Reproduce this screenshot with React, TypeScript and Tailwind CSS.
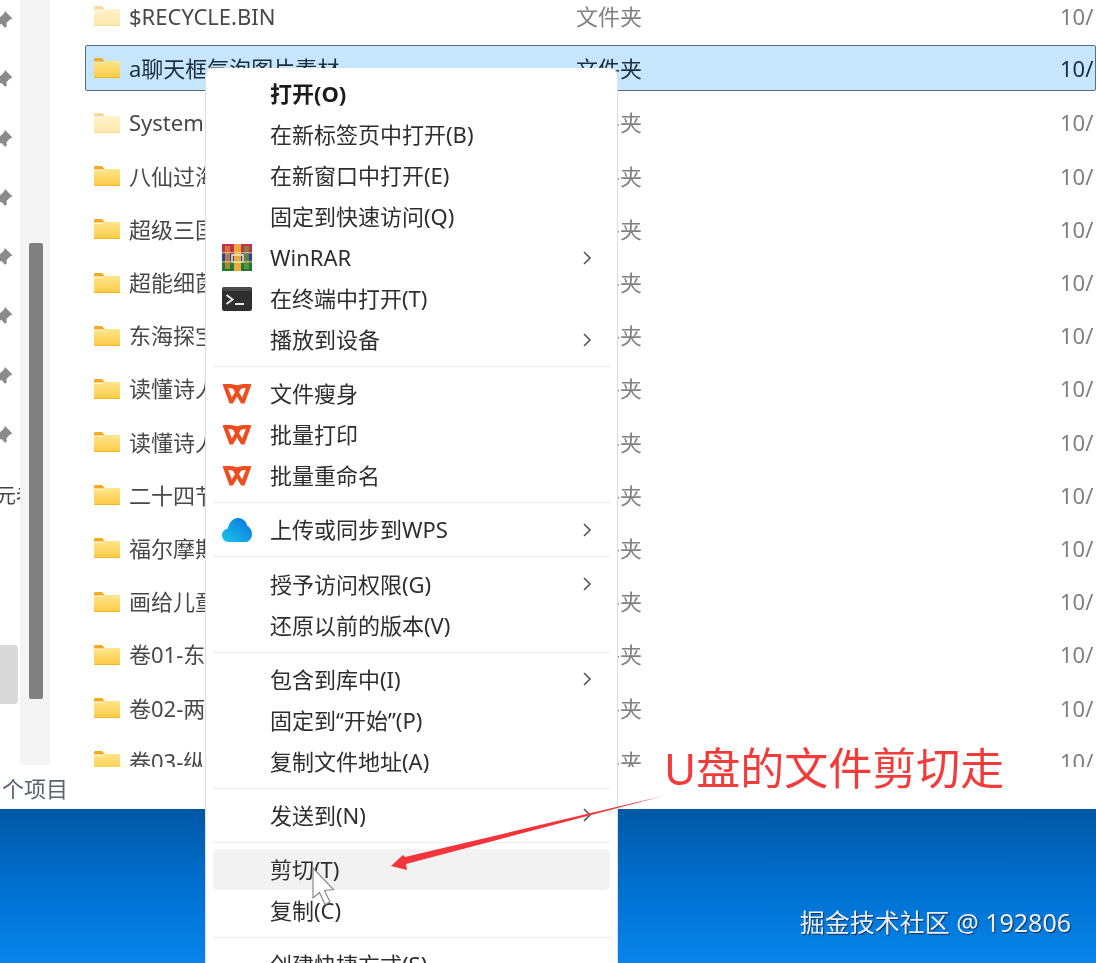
import React from "react";

const font = { fontFamily: '"Noto Sans", "Noto Sans CJK SC", sans-serif' };

type Row = { name: string; hidden?: boolean; selected?: boolean };
const rows: Row[] = [
  { name: "$RECYCLE.BIN", hidden: true },
  { name: "a聊天框气泡图片素材", selected: true },
  { name: "System Volume Information", hidden: true },
  { name: "八仙过海" },
  { name: "超级三国" },
  { name: "超能细菌" },
  { name: "东海探宝" },
  { name: "读懂诗人" },
  { name: "读懂诗人" },
  { name: "二十四节气" },
  { name: "福尔摩斯" },
  { name: "画给儿童" },
  { name: "卷01-东" },
  { name: "卷02-两" },
  { name: "卷03-纵" },
];

function Folder({ pale }: { pale?: boolean }) {
  return (
    <svg width="28" height="22" viewBox="0 0 28 22" className={pale ? "shrink-0 opacity-45" : "shrink-0"}>
      <defs>
        <linearGradient id="fd" x1="0" y1="0" x2="0" y2="1">
          <stop offset="0" stopColor="#ffe58c" />
          <stop offset="1" stopColor="#fccb45" />
        </linearGradient>
      </defs>
      <path d="M1 2.500C1 1.500 1.600 1 2.500 1h6.500l3 3.500H1z" fill="#f3ab1d" />
      <path d="M1 5.500h9.500l2-1.500H26c.7 0 1 .4 1 1v15c0 .7-.4 1-1 1H2c-.7 0-1-.4-1-1z" fill="url(#fd)" />
      <rect x="1" y="20" width="26" height="1" fill="#f3b52c" />
    </svg>
  );
}

function Pin() {
  return (
    <svg width="20" height="20" viewBox="0 0 20 20" className="-ml-[7px] block shrink-0">
      <path d="M12 1l7.500 7.500-2.500 1-3.500 3.500.3 3.500-1.800 1.200-3.800-4L3 18.500l-1-1 4.800-5.500L3 8.200l1.200-1.800 3.500.3L11 3.500z" fill="#8a8a8a" />
    </svg>
  );
}

function Chevron() {
  return (
    <svg width="10" height="16" viewBox="0 0 10 16" className="absolute right-[18px] top-1/2 -translate-y-1/2">
      <path d="M2 2l6 6-6 6" fill="none" stroke="#555" strokeWidth="1.6" />
    </svg>
  );
}

function WinRar() {
  return (
    <svg width="30" height="27" viewBox="0 0 30 27">
      <rect x="0" y="0" width="30" height="9" fill="#c4314b" />
      <rect x="0" y="9" width="30" height="9" fill="#34409c" />
      <rect x="0" y="18" width="30" height="9" fill="#1f7a3a" />
      <rect x="3" y="2" width="5" height="23" fill="#d98c3a" opacity=".75" />
      <rect x="22" y="2" width="5" height="23" fill="#6f9e3a" opacity=".7" />
      <rect x="12" y="0" width="7" height="27" fill="#ecaa3c" />
      <rect x="10" y="11" width="11" height="7" fill="none" stroke="#f4e2b8" strokeWidth="1.6" />
      <rect x="0" y="8" width="30" height="1.400" fill="#e8d090" opacity=".7" />
      <rect x="0" y="17" width="30" height="1.400" fill="#e8d090" opacity=".7" />
    </svg>
  );
}

function Terminal() {
  return (
    <svg width="30" height="24" viewBox="0 0 30 24">
      <rect width="30" height="24" rx="2.500" fill="#2e2e2e" />
      <rect width="30" height="4" rx="2" fill="#4a4a4a" />
      <path d="M4.500 8l6 4.500-6 4.500" fill="none" stroke="#e8e8e8" strokeWidth="2" />
      <rect x="13" y="16" width="9" height="2" fill="#e8e8e8" />
    </svg>
  );
}

function Wps() {
  return (
    <svg width="30" height="21" viewBox="0 0 30 21">
      <path
        d="M0.500 1.200C6 .6 10.500.8 15 2.200 19.500.8 24 .6 29.500 1.200L22.500 20.500h-3.400L15 13.500 10.900 20.500H7.500zM6.200 5l3.600 9.600L13 9.200 11.200 5.900C9.500 5.200 8 5 6.200 5zM23.800 5c-1.800 0-3.300.2-5 .9L17 9.200l3.200 5.400z"
        fill="#ee4d1f"
        fillRule="evenodd"
      />
    </svg>
  );
}

function Cloud() {
  return (
    <svg width="30" height="24" viewBox="0 0 30 24">
      <defs>
        <linearGradient id="cl" x1="0" y1="1" x2="1" y2="0">
          <stop offset="0" stopColor="#14c8e6" />
          <stop offset="1" stopColor="#0f6fe0" />
        </linearGradient>
      </defs>
      <path d="M6.500 24C2.800 24 0 21 0 17.300c0-3.400 2.400-6 5.700-6.500C7 4.600 11 0 16 0c4.600 0 8.300 3.300 9.300 7.800C28.200 9.500 30 12.600 30 16.200 30 20.800 27 24 23 24z" fill="url(#cl)" />
    </svg>
  );
}

type Item = { label: string; bold?: boolean; icon?: React.ReactNode; sub?: boolean; hot?: boolean } | "sep";
const items: Item[] = [
  { label: "打开(O)", bold: true },
  { label: "在新标签页中打开(B)" },
  { label: "在新窗口中打开(E)" },
  { label: "固定到快速访问(Q)" },
  { label: "WinRAR", icon: <WinRar />, sub: true },
  { label: "在终端中打开(T)", icon: <Terminal /> },
  { label: "播放到设备", sub: true },
  "sep",
  { label: "文件瘦身", icon: <Wps /> },
  { label: "批量打印", icon: <Wps /> },
  { label: "批量重命名", icon: <Wps /> },
  "sep",
  { label: "上传或同步到WPS", icon: <Cloud />, sub: true },
  "sep",
  { label: "授予访问权限(G)", sub: true },
  { label: "还原以前的版本(V)" },
  "sep",
  { label: "包含到库中(I)", sub: true },
  { label: "固定到\u201c开始\u201d(P)" },
  { label: "复制文件地址(A)" },
  "sep",
  { label: "发送到(N)", sub: true },
  "sep",
  { label: "剪切(T)", hot: true },
  { label: "复制(C)" },
  "sep",
  { label: "创建快捷方式(S)" },
];

export default function App() {
  return (
    <div className="relative h-[963px] w-[1096px] overflow-hidden bg-white blur-[0.5px]" style={font}>
      {/* explorer window */}
      <div className="flex h-[767px] overflow-hidden bg-white">
        <div className="relative flex w-[20px] shrink-0 flex-col gap-[39.300px] overflow-hidden pt-[10px]">
          {Array.from({ length: 8 }).map((_, i) => (
            <Pin key={i} />
          ))}
          <div className="-ml-[4px] text-[20px] leading-[24px] whitespace-nowrap text-[#444]">元老</div>
          <div className="absolute left-0 top-[645px] h-[59px] w-[18px] rounded-r-[4px] bg-[#d9d9d9]" />
        </div>
        <div className="h-[765px] w-[30px] shrink-0 bg-[#f4f4f4] pl-[9px] pt-[243px]">
          <div className="h-[456px] w-[14px] rounded-[2px] bg-[#808080]" />
        </div>
        <div className="flex-1 overflow-hidden pl-[35px]">
          <div className="-mt-[6.500px] flex flex-col">
            {rows.map((r, i) => (
              <div
                key={i}
                className={
                  r.selected
                    ? "-mt-[1.500px] mb-[9.800px] flex h-[45.500px] items-center rounded-[2px] border border-[#5b6e80] bg-[#c5e6fc] pl-[7px] pt-[1px] whitespace-nowrap"
                    : "mb-[8.200px] flex h-[45px] items-center pl-[8px] whitespace-nowrap"
                }
              >
                <Folder pale={r.hidden} />
                <span className={`ml-[8px] w-[447px] overflow-hidden text-[22px] ${r.selected ? "text-[#1c2c3c]" : "text-[#484848]"}`}>{r.name}</span>
                <span className={`w-[484px] text-[22px] ${r.selected ? "text-[#1c2c3c]" : "text-[#808080]"}`}>文件夹</span>
                <span className={`text-[22px] ${r.selected ? "text-[#1c2c3c]" : "text-[#808080]"}`}>10/</span>
              </div>
            ))}
          </div>
        </div>
      </div>
      {/* status bar */}
      <div className="flex h-[42px] items-center bg-white pl-[2px] text-[22px] text-[#5a6470]">个项目</div>
      {/* desktop */}
      <div className="h-[154px] bg-gradient-to-b from-[#0058a4] via-[#0070d0] to-[#0884ea]">
        <div className="flex h-full items-end justify-end pr-[25px] pb-[24px] text-[25px] leading-[34px] text-[#e8f0f8] [text-shadow:1px_1px_1px_#1c3050]">
          掘金技术社区 @ 192806
        </div>
      </div>

      {/* context menu */}
      <div className="absolute left-[205px] top-[68px] w-[413px] rounded-t-[8px] border-x border-[#dedede] bg-white px-[7px] pt-[5px] text-[22px] text-[#2e2e2e]">
        {items.map((it, i) =>
          it === "sep" ? (
            <div key={i} className="flex h-[13.200px] items-center">
              <div className="h-px w-full bg-[#ececec]" />
            </div>
          ) : (
            <div key={i} className={`relative flex h-[41px] items-center rounded-[5px] ${it.hot ? "bg-[#f2f2f2]" : ""}`}>
              <div className="flex w-[57px] shrink-0 justify-start pl-[9px]">{it.icon}</div>
              <span className={`whitespace-nowrap ${it.bold ? "font-bold text-[#1c1c1c]" : ""}`}>{it.label}</span>
              {it.sub && <Chevron />}
            </div>
          )
        )}
      </div>

      {/* annotation */}
      <div className="absolute left-[664px] top-[738px] text-[44px] leading-[60px] whitespace-nowrap text-[#f23c3c]">U盘的文件剪切走</div>
      <svg width="1096" height="963" className="absolute left-0 top-0">
        <polygon points="663,796 405,857 403,855 391,866 407,870 406,864" fill="#f2353b" />
        <path d="M313 868v30l6.500-5.500 5.500 12 5-2.500-5.500-11.500 9-1z" fill="#fff" stroke="#8a8a8a" strokeWidth="1.200" />
      </svg>
    </div>
  );
}
